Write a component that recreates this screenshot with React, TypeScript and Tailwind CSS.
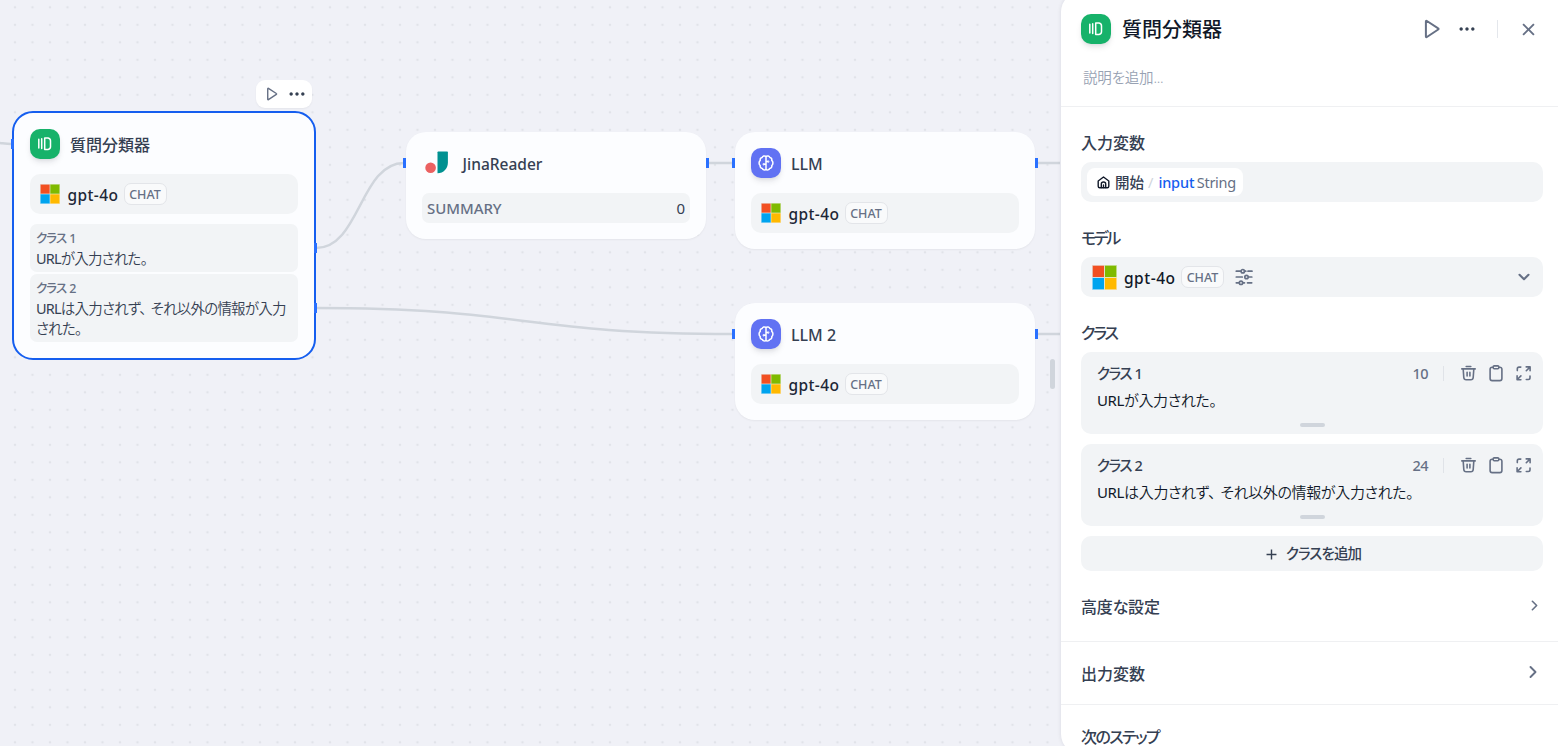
import { Fragment, type ReactNode } from 'react';
import { RiMoreFill, RiCloseLine, RiAddLine } from 'react-icons/ri';
import { ChevronDown, ChevronRight } from 'lucide-react';

type IconProps = { className?: string };

function PlayIcon({ className }: IconProps) {
  return (
    <svg className={className} viewBox="0 0 20 20" fill="none" stroke="currentColor" strokeWidth="2" strokeLinejoin="round">
      <path d="M3.900 2.600c0-.7.500-.9 1-.6l11.300 7.300c.5.300.5.900 0 1.200L4.900 18c-.5.300-1 .1-1-.6z" />
    </svg>
  );
}

function ClassifierIcon() {
  return (
    <svg width="18" height="18" viewBox="0 0 18 18" fill="none" stroke="currentColor" strokeWidth="1.500" strokeLinecap="round" strokeLinejoin="round">
      <path d="M2.800 4.300v8.800M5.700 3.700v9.900" />
      <path d="M8.700 3h3.400c1.500.3 2.400 1.200 2.400 2.700v6c0 1.500-.9 2.400-2.400 2.700H8.700z" />
    </svg>
  );
}

function LlmIcon() {
  return (
    <svg width="18" height="18" viewBox="0 0 18 18" fill="none" stroke="currentColor" strokeWidth="1.500" strokeLinecap="round" strokeLinejoin="round">
      <path d="M9 2.500C7.800 1.600 5.700 1.900 5.100 3.500 3.600 3.700 2.900 5 3.300 6.300 1.700 7.500 1.700 10.200 3.200 11.500c-.3 1.500.7 2.700 2.100 2.900.6 1.500 2.500 2 3.700 1.100 1.200.9 3.100.4 3.700-1.100 1.400-.2 2.400-1.400 2.100-2.900 1.500-1.300 1.500-4-.1-5.200.4-1.300-.3-2.600-1.800-2.800C12.300 1.900 10.200 1.600 9 2.500z" />
      <path d="M9 2.500v13M9 10.300H7M9 7.600h1.800" />
      <circle cx="6.700" cy="10.300" r=".4" />
      <circle cx="11.300" cy="7.600" r=".4" />
    </svg>
  );
}

function MicrosoftLogo({ className }: IconProps) {
  return (
    <svg className={className} viewBox="0 0 25 25">
      <path fill="#e6d3c8" d="M0 0h12.500v12.500H0z" />
      <path fill="#cfe2a6" d="M12.500 0H25v12.500H12.500z" />
      <path fill="#a9dbf5" d="M0 12.500h12.500V25H0z" />
      <path fill="#f9dfa0" d="M12.500 12.500H25V25H12.500z" />
      <path fill="#f25022" d="M.8.800h11.200v11.200H.8z" />
      <path fill="#7fba00" d="M13 .800h11.200v11.200H13z" />
      <path fill="#00a4ef" d="M.8 13h11.200v11.200H.8z" />
      <path fill="#ffb900" d="M13 13h11.200v11.200H13z" />
    </svg>
  );
}

function JinaLogo() {
  return (
    <svg width="30" height="30" viewBox="0 0 30 30">
      <circle cx="8.600" cy="19.800" r="5.300" fill="#eb6161" />
      <path d="M15.500 4.300c0-.4.300-.7.700-.7h9c.4 0 .7.300.7.700v10.200c0 6-4.300 10.700-10.400 10.800z" fill="#009191" />
    </svg>
  );
}

function HomeIcon() {
  return (
    <svg width="15" height="15" viewBox="0 0 15 15" fill="none" stroke="#101828" strokeWidth="1.400" strokeLinecap="round" strokeLinejoin="round">
      <path d="M2.200 6 7.500 2 12.800 6v5.200c0 .9-.6 1.500-1.500 1.500H3.700c-.9 0-1.500-.6-1.500-1.500z" />
      <path d="M5.300 12.500V9c0-2.600 4.400-2.600 4.400 0v3.500M7.500 10v2.500" />
    </svg>
  );
}

function SlidersIcon() {
  return (
    <svg width="20" height="20" viewBox="0 0 20 20" fill="none" stroke="#667085" strokeWidth="1.700" strokeLinecap="round">
      <path d="M2.300 4.200H6.500M10.500 4.200h1.300M14 4.200h4M2.300 10h6M15 10h2.800M2.300 15.800h2.300M9 15.800h1.500M13.500 15.800h4.200" />
      <circle cx="8.800" cy="4.200" r="1.700" />
      <circle cx="12.500" cy="10" r="1.700" />
      <circle cx="7" cy="15.800" r="1.700" />
    </svg>
  );
}

function TrashIcon() {
  return (
    <svg width="17" height="17" viewBox="0 0 17 17" fill="none" stroke="currentColor" strokeWidth="1.600" strokeLinecap="round" strokeLinejoin="round">
      <path d="M1.800 3.900h13.400M6.200 1.500h4.600M3.200 4.200l.6 8.300c.1 1.500.9 2.300 2.400 2.300h4.600c1.500 0 2.300-.8 2.400-2.300l.6-8.300" />
      <path d="M7.100 7.300v3.600M9.900 7.300v3.600" />
    </svg>
  );
}

function ClipboardIcon() {
  return (
    <svg width="17" height="17" viewBox="0 0 17 17" fill="none" stroke="currentColor" strokeWidth="1.600" strokeLinejoin="round">
      <path d="M5.200 2.200h-1C3 2.200 2.100 3 2.100 4.300v9.200c0 1.300.8 2.100 2.100 2.100h7.600c1.300 0 2.100-.8 2.100-2.100V4.300c0-1.300-.8-2.100-2.100-2.100h-1" />
      <rect x="5.200" y=".9" width="5.600" height="2.900" rx="1" />
    </svg>
  );
}

function ExpandIcon() {
  return (
    <svg width="17" height="17" viewBox="0 0 17 17" fill="none" stroke="currentColor" strokeWidth="1.600" strokeLinecap="round" strokeLinejoin="round">
      <path d="M11.200 1.900h3.900v3.900M14.900 2.100l-3.600 3.600M5.900 14.700H2.100v-3.900M2.300 14.500l3.600-3.600" />
      <path d="M2.300 5.600V3.800c0-1.100.6-1.700 1.700-1.700h1.800M11.300 14.500h2c1.100 0 1.700-.6 1.700-1.700V11" />
    </svg>
  );
}

function BlockIcon({ color, children }: { color: string; children: ReactNode }) {
  return (
    <div className={`flex size-[30px] shrink-0 items-center justify-center rounded-[10px] text-white shadow-md shadow-gray-900/10 ${color}`}>
      {children}
    </div>
  );
}

function ChatBadge() {
  return (
    <span className="flex h-[22px] w-[43px] items-center justify-center rounded-[7px] border border-[#e3e5e9] bg-[#f9fafb] pt-0.5 text-[12.5px] font-medium text-[#667085]">
      CHAT
    </span>
  );
}

function ModelBar() {
  return (
    <div className="flex h-10 items-center rounded-[10px] bg-[#f2f4f6] pr-[10px] pl-[9.500px]">
      <MicrosoftLogo className="size-[20px]" />
      <span className="ml-2 w-[50px] pt-[3px] text-[15.5px] font-medium tracking-[0.4px] whitespace-nowrap text-[#1d2736]">gpt-4o</span>
      <div className="ml-1.5">
        <ChatBadge />
      </div>
    </div>
  );
}

// Full-width comma keeps its own advance while the kana around it are set tight.
function Prose({ children }: { children: string }) {
  const parts = children.replace('URL', '').split('、');
  return (
    <>
      <span className="font-normal">URL</span>
      {parts.map((part, i) => (
        <Fragment key={part}>
          {i > 0 && <span className="mr-[5px]">、</span>}
          {part}
        </Fragment>
      ))}
    </>
  );
}

function NodeHeader({ icon, title }: { icon: ReactNode; title: string }) {
  return (
    <div className="flex h-[30px] items-center gap-[10px]">
      {icon}
      <span className="pt-0.5 text-[16px] font-medium whitespace-nowrap text-[#354052]">{title}</span>
    </div>
  );
}

function Node({ className, children }: { className: string; children: ReactNode }) {
  return (
    <div className={`absolute w-[300px] rounded-[20px] bg-[#fcfdff] px-4 py-4 shadow-xs ${className}`}>{children}</div>
  );
}

function Handle({ className }: { className: string }) {
  return <div className={`absolute h-[10px] w-[3px] bg-[#2970ff] ${className}`} />;
}

const nodeClasses = [
  { name: 'クラス 1', text: 'URLが入力された。' },
  { name: 'クラス 2', text: 'URLは入力されず、それ以外の情報が入力された。' },
];

function Canvas() {
  return (
    <div className="absolute inset-0 overflow-hidden bg-[#f0f1f7]">
      <svg className="absolute inset-0 size-full">
        <defs>
          <pattern id="dots" x="6.250" y="-1.450" width="17.500" height="17.500" patternUnits="userSpaceOnUse">
            <circle cx="8.750" cy="8.750" r="1.250" fill="#e1e3e9" />
          </pattern>
        </defs>
        <rect width="100%" height="100%" fill="url(#dots)" />
        <g fill="none" stroke="#d0d5dc" strokeWidth="2.500">
          <path d="M-4 142.500C2 143 6 144 11 144" />
          <path d="M316 248C360 248 360 163 404 163" />
          <path d="M316 308C524 308 524 334 733 334" />
          <path d="M708 163H733M1037 163H1060M1037 334H1060" />
        </g>
      </svg>

      <div className="absolute top-[80px] left-[256px] flex h-[28px] w-[56px] items-center justify-between rounded-[9px] bg-white pr-[5px] pl-[9px] shadow-xs">
        <PlayIcon className="size-[14px] text-[#667085]" />
        <RiMoreFill className="size-5 text-[#354052]" />
      </div>

      <div className="absolute top-[111px] left-[12px] h-[249px] w-[304px] rounded-[21px] border-2 border-[#155eef] bg-[#fcfdff] p-4">
        <NodeHeader icon={<BlockIcon color="bg-[#17b26a]"><ClassifierIcon /></BlockIcon>} title="質問分類器" />
        <div className="mt-[15px]">
          <ModelBar />
        </div>
        <div className="mt-[10px] flex flex-col gap-0.5">
          {nodeClasses.map((item) => (
            <div key={item.name} className="rounded-[7px] bg-[#f2f4f6] pt-[5px] pb-1 pl-1.5">
              <div className="text-[12.5px] leading-[19px] font-medium tracking-[-1px] text-[#667085] [word-spacing:1px]">{item.name}</div>
              <div className="w-[258px] text-[14.5px] leading-[20px] font-[350] tracking-[-0.8px] text-[#354052]">
                <Prose>{item.text}</Prose>
              </div>
            </div>
          ))}
        </div>
      </div>

      <Node className="top-[132px] left-[406px] h-[107px]">
        <div className="flex h-[30px] items-center gap-[10.500px]">
          <JinaLogo />
          <span className="pt-[3px] text-[15.5px] font-medium text-[#354052]">JinaReader</span>
        </div>
        <div className="mt-[15px] flex h-[30px] items-center justify-between rounded-[7px] bg-[#f2f4f6] px-[5px] pt-px text-[15px]">
          <span className="font-medium tracking-[-0.05px] text-[#667085]">SUMMARY</span>
          <span className="text-[#354052]">0</span>
        </div>
      </Node>

      <Node className="top-[132px] left-[735px] h-[117px]">
        <NodeHeader icon={<BlockIcon color="bg-[#6172f3]"><LlmIcon /></BlockIcon>} title="LLM" />
        <div className="mt-[15px]"><ModelBar /></div>
      </Node>

      <Node className="top-[303px] left-[735px] h-[117px]">
        <NodeHeader icon={<BlockIcon color="bg-[#6172f3]"><LlmIcon /></BlockIcon>} title="LLM 2" />
        <div className="mt-[15px]"><ModelBar /></div>
      </Node>

      <Handle className="top-[139px] left-[11px]" />
      <Handle className="top-[243px] left-[314px]" />
      <Handle className="top-[303px] left-[314px]" />
      <Handle className="top-[158px] left-[403px]" />
      <Handle className="top-[158px] left-[706px]" />
      <Handle className="top-[158px] left-[732px]" />
      <Handle className="top-[158px] left-[1035px]" />
      <Handle className="top-[329px] left-[732px]" />
      <Handle className="top-[329px] left-[1035px]" />

      <div className="absolute top-[359px] left-[1050px] h-[30px] w-[5px] rounded-full bg-[#d0d5dc]" />
    </div>
  );
}

function SectionTitle({ className = '', children }: { className?: string; children: ReactNode }) {
  return <h3 className={`text-[16px] leading-[20px] font-medium text-[#354052] ${className}`}>{children}</h3>;
}

function ClassCard({ name, text, count }: { name: string; text: string; count: number }) {
  return (
    <div className="flex h-[82px] flex-col rounded-[10px] bg-[#f2f4f6] pt-[11px] pr-[11px] pl-4">
      <div className="flex h-5 items-center text-[#667085]">
        <span className="flex-1 pt-px text-[14.5px] font-medium tracking-[-1.400px] text-[#354052] [word-spacing:1px]">{name}</span>
        <span className="pt-px text-[14.5px] font-medium tracking-[-0.5px]">{count}</span>
        <span className="mr-4 ml-[15px] h-[15px] w-px bg-[#e0e3e8]" />
        <div className="flex gap-[10.500px]">
          <TrashIcon />
          <ClipboardIcon />
          <ExpandIcon />
        </div>
      </div>
      <p className="mt-[7px] text-[15px] leading-[20px] font-[350] tracking-[-0.350px] text-[#101828]">
        <Prose>{text}</Prose>
      </p>
      <div className="mt-[13px] ml-[203px] h-1 w-[25px] shrink-0 rounded-full bg-[#d0d5dc]" />
    </div>
  );
}

function SidePanel() {
  return (
    <aside className="relative -mt-2 flex h-[762px] w-[497px] flex-col rounded-l-[20px] bg-white pt-2 shadow-[0_0_4px_rgba(16,24,40,0.1)]">
      <header className="h-[107px] border-b border-[#eff0f2] pt-[14px] pr-[18px] pl-5">
        <div className="flex h-[30px] items-center">
          <BlockIcon color="bg-[#17b26a]"><ClassifierIcon /></BlockIcon>
          <h2 className="ml-[11px] flex-1 pt-0.5 text-[20px] font-medium text-[#101828]">質問分類器</h2>
          <PlayIcon className="size-5 text-[#667085]" />
          <RiMoreFill className="ml-[15px] size-5 text-[#354052]" />
          <span className="mr-[19px] ml-5 h-[18px] w-px bg-[#e4e7ec]" />
          <RiCloseLine className="size-[23px] text-[#667085]" />
        </div>
        <p className="mt-[23px] ml-0.5 text-[14.5px] leading-[20px] font-[350] tracking-[-0.2px] text-[#98a2b3]">説明を追加...</p>
      </header>

      <section className="pt-[26px] pr-[15px] pl-5">
        <SectionTitle>入力変数</SectionTitle>
        <div className="mt-[9px] flex h-10 items-center rounded-[10px] bg-[#f2f4f6] px-1.5">
          <div className="flex h-7 w-[156px] items-center rounded-[8px] bg-white pt-px pl-[9px] text-[14.5px] whitespace-nowrap">
            <HomeIcon />
            <span className="ml-[4px] font-medium text-[#354052]">開始</span>
            <span className="mr-[5px] ml-1 text-[#d0d5dc]">/</span>
            <span className="font-medium tracking-[-0.15px] text-[#155eef]">input</span>
            <span className="ml-[2.500px] tracking-[-0.3px] text-[#667085]">String</span>
          </div>
        </div>

        <div className="mt-[26px]">
          <SectionTitle className="tracking-[-2.400px]">モデル</SectionTitle>
        </div>
        <div className="mt-[9px] flex h-10 items-center rounded-[10px] bg-[#f2f4f6] pr-[10px] pl-[11px]">
          <MicrosoftLogo className="size-[25px]" />
          <span className="ml-[7px] w-[51px] pt-[3px] text-[15.5px] font-medium tracking-[0.5px] whitespace-nowrap text-[#101828]">gpt-4o</span>
          <div className="mr-[10px] ml-1.5"><ChatBadge /></div>
          <SlidersIcon />
          <ChevronDown className="ml-auto size-[18px] text-[#667085]" strokeWidth={2.8} />
        </div>

        <div className="mt-[26px]">
          <SectionTitle className="tracking-[-2.200px]">クラス</SectionTitle>
        </div>
        <div className="mt-[9px] flex flex-col gap-[10px]">
          <ClassCard name="クラス 1" text="URLが入力された。" count={10} />
          <ClassCard name="クラス 2" text="URLは入力されず、それ以外の情報が入力された。" count={24} />
          <button className="flex h-[35px] items-center justify-center gap-[6px] rounded-[10px] bg-[#f2f4f6] pt-px text-[14.5px] font-medium tracking-[-0.9px] text-[#354052]">
            <RiAddLine className="size-[17px]" />
            クラスを追加
          </button>
        </div>
        <div className="mt-[26px] flex h-5 items-center justify-between">
          <SectionTitle className="tracking-[-0.2px]">高度な設定</SectionTitle>
          <ChevronRight className="mb-[3px] size-[17px] text-[#667085]" strokeWidth={2.3} />
        </div>
      </section>

      <section className="mt-6 flex h-16 items-center justify-between border-y border-[#eff0f2] pt-px pr-[15px] pl-5">
        <SectionTitle>出力変数</SectionTitle>
        <ChevronRight className="mb-1 size-5 text-[#667085]" strokeWidth={2.3} />
      </section>
      <section className="pt-[22px] pl-5">
        <SectionTitle className="tracking-[-1.600px]">次のステップ</SectionTitle>
      </section>
    </aside>
  );
}

export default function App() {
  return (
    <div className="relative flex h-[746px] w-[1558px] justify-end overflow-hidden font-['Noto_Sans','Noto_Sans_CJK_JP',sans-serif] [font-feature-settings:'palt']">
      <Canvas />
      <SidePanel />
    </div>
  );
}
